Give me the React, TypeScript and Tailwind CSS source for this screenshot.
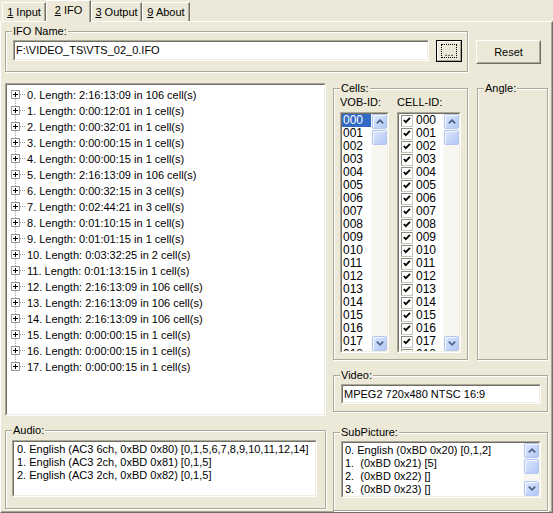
import React from "react";

const FONT = "font-['Liberation_Sans',Arial,sans-serif]";

const titles: [string, number][] = [
  ["2:16:13:09", 106],
  ["0:00:12:01", 1],
  ["0:00:32:01", 1],
  ["0:00:00:15", 1],
  ["0:00:00:15", 1],
  ["2:16:13:09", 106],
  ["0:00:32:15", 3],
  ["0:02:44:21", 3],
  ["0:01:10:15", 1],
  ["0:01:01:15", 1],
  ["0:03:32:25", 2],
  ["0:01:13:15", 1],
  ["2:16:13:09", 106],
  ["2:16:13:09", 106],
  ["2:16:13:09", 106],
  ["0:00:00:15", 1],
  ["0:00:00:15", 1],
  ["0:00:00:15", 1],
];

// the lists show 000-017 and the top of 018
const ids = Array.from({ length: 19 }, (_, i) => String(i).padStart(3, "0"));

const audio = [
  "0. English (AC3 6ch, 0xBD 0x80) [0,1,5,6,7,8,9,10,11,12,14]",
  "1. English (AC3 2ch, 0xBD 0x81) [0,1,5]",
  "2. English (AC3 2ch, 0xBD 0x82) [0,1,5]",
];

const subs = [
  "0. English (0xBD 0x20) [0,1,2]",
  "1.  (0xBD 0x21) [5]",
  "2.  (0xBD 0x22) []",
  "3.  (0xBD 0x23) []",
];

function Group({ label, className, children }: { label: string; className: string; children?: React.ReactNode }) {
  return (
    <fieldset className={`border border-[#ACA899] shadow-[inset_1px_1px_0_#fff,1px_1px_0_#fff] ${className}`}>
      <legend className="ml-[6px] bg-[#ECE9D8] px-[1px] leading-[13px]">{label}</legend>
      {children}
    </fieldset>
  );
}

function Sunken({ className, children }: { className: string; children?: React.ReactNode }) {
  return (
    <div className={`border border-t-[#ACA899] border-l-[#ACA899] border-r-white border-b-white ${className}`}>
      <div className="h-full w-full overflow-hidden border border-t-[#716F64] border-l-[#716F64] border-r-[#F1EFE2] border-b-[#F1EFE2] bg-white">
        {children}
      </div>
    </div>
  );
}

function ScrollBtn({ dir }: { dir?: "up" | "down" }) {
  return (
    <div className="flex h-[15px] w-[15px] items-center justify-center rounded-[2px] border border-[#B4C6F2] bg-gradient-to-br from-[#DDE7FE] to-[#B3C7F6] shadow-[inset_1px_1px_0_#F2F6FF]">
      {dir && (
        <svg width="8" height="5" viewBox="0 0 8 5">
          <path
            d={dir === "up" ? "M0.8 4.4 L4 1.2 L7.2 4.4" : "M0.8 0.6 L4 3.8 L7.2 0.6"}
            fill="none"
            stroke="#4D6185"
            strokeWidth="1.7"
          />
        </svg>
      )}
    </div>
  );
}

function VScroll() {
  return (
    <div className="flex h-full w-[16px] shrink-0 flex-col justify-between bg-[#F7F6F1] pl-[1px]">
      <div className="flex flex-col gap-[1px]">
        <ScrollBtn dir="up" />
        <ScrollBtn />
      </div>
      <ScrollBtn dir="down" />
    </div>
  );
}

function TreeRow({ i, t, n }: { i: number; t: string; n: number }) {
  const first = i === 0;
  const last = i === titles.length - 1;
  return (
    <div className="flex h-[16px] items-center">
      <svg width="18" height="16" className="shrink-0">
        {!first && <line x1="8.5" y1="0" x2="8.5" y2="3" stroke="#A0A0A0" strokeDasharray="1 1" />}
        {!last && <line x1="8.5" y1="12" x2="8.5" y2="16" stroke="#A0A0A0" strokeDasharray="1 1" />}
        <line x1="13" y1="7.5" x2="18" y2="7.5" stroke="#A0A0A0" strokeDasharray="1 1" />
        <rect x="4.5" y="3.5" width="8" height="8" fill="#fff" stroke="#919B9C" />
        <line x1="6" y1="7.5" x2="11" y2="7.5" stroke="#000" />
        <line x1="8.5" y1="5" x2="8.5" y2="10" stroke="#000" />
      </svg>
      <span className="whitespace-nowrap pl-[2px]">
        {i}. Length: {t} in {n} cell(s)
      </span>
    </div>
  );
}

function Tab({ digit, rest, w, selected }: { digit: string; rest: string; w: string; selected?: boolean }) {
  return (
    <div
      className={`flex shrink-0 items-center justify-center border-l border-t border-r border-l-white border-t-white border-r-[#716F64] bg-[#ECE9D8] shadow-[inset_-1px_0_0_#ACA899] ${w} ${
        selected ? "relative z-10 h-[22px] pb-[2px]" : "mt-[2px] h-[19px]"
      }`}
    >
      <span className="whitespace-nowrap">
        <span className="underline">{digit}</span> {rest}
      </span>
    </div>
  );
}

function Check() {
  return (
    <div className="flex h-[12px] w-[12px] shrink-0 items-center justify-center border border-t-[#8E8D84] border-l-[#8E8D84] border-r-[#C9C7BA] border-b-[#C9C7BA] bg-white">
      <svg width="8" height="7" viewBox="0 0 8 7">
        <path d="M0.8 3 L2.8 5.2 L7 0.8" fill="none" stroke="#000" strokeWidth="1.8" />
      </svg>
    </div>
  );
}

export default function App() {
  return (
    <div className={`h-[513px] w-[553px] overflow-hidden bg-[#ECE9D8] text-[11px] text-black ${FONT}`}>
      <div className="flex h-[21px] items-start pl-[2px]">
        <Tab digit="1" rest="Input" w="w-[44px]" />
        <Tab digit="2" rest="IFO" w="w-[45px]" selected />
        <Tab digit="3" rest="Output" w="w-[51px]" />
        <Tab digit="9" rest="About" w="w-[48px]" />
      </div>

      <div className="h-[492px] border-l border-t border-r border-b border-l-white border-t-white border-r-[#716F64] border-b-[#716F64] pl-[4px] pt-[3px] shadow-[inset_-1px_-1px_0_#ACA899]">
        {/* row 1 */}
        <div className="flex items-start">
          <Group label="IFO Name:" className="h-[47px] w-[463px]">
            <div className="flex items-start pl-[7px] pt-[2px]">
              <Sunken className="h-[21px] w-[416px]">
                <div className="pl-[1px] pt-[2px] leading-[13px]">F:\VIDEO_TS\VTS_02_0.IFO</div>
              </Sunken>
              <div className="ml-[7px] h-[22px] w-[26px] border border-black">
                <div className="flex h-full w-full items-center justify-center border border-t-white border-l-white border-r-[#ACA899] border-b-[#ACA899]">
                  <div className="flex h-[14px] w-[16px] items-end justify-center border border-dotted border-black leading-[10px]">
                    ...
                  </div>
                </div>
              </div>
            </div>
          </Group>
          <div className="ml-[8px] mt-[15px] h-[24px] w-[65px] border border-t-white border-l-white border-r-[#716F64] border-b-[#716F64]">
            <div className="flex h-full w-full items-center justify-center border border-t-[#ECE9D8] border-l-[#ECE9D8] border-r-[#ACA899] border-b-[#ACA899]">
              Reset
            </div>
          </div>
        </div>

        {/* row 2 */}
        <div className="mt-[10px] flex items-start">
          <Sunken className="mt-[1px] h-[333px] w-[321px]">
            <div className="pt-[2px]">
              {titles.map(([t, n], i) => (
                <TreeRow key={i} i={i} t={t} n={n} />
              ))}
            </div>
          </Sunken>

          <div className="ml-[7px] flex flex-col">
            <div className="flex items-start">
              <Group label="Cells:" className="h-[278px] w-[135px]">
                <div className="flex gap-[8px] pl-[6px] pt-[1px]">
                  <div className="flex flex-col">
                    <div className="leading-[13px]">VOB-ID:</div>
                    <Sunken className="mt-[3px] h-[241px] w-[49px]">
                      <div className="flex h-full">
                        <div className="flex-1 overflow-hidden text-[12px] leading-[13px]">
                          {ids.map((id, i) => (
                            <div key={id} className={`h-[13px] pl-[1px] ${i === 0 ? "bg-[#316AC5] text-white" : ""}`}>
                              {id}
                            </div>
                          ))}
                        </div>
                        <VScroll />
                      </div>
                    </Sunken>
                  </div>
                  <div className="flex flex-col">
                    <div className="leading-[13px]">CELL-ID:</div>
                    <Sunken className="mt-[3px] h-[241px] w-[64px]">
                      <div className="flex h-full">
                        <div className="flex-1 overflow-hidden text-[12px] leading-[13px]">
                          {ids.map((id) => (
                            <div key={id} className="flex h-[13px] items-center gap-[3px] pl-[2px]">
                              <Check />
                              <span>{id}</span>
                            </div>
                          ))}
                        </div>
                        <VScroll />
                      </div>
                    </Sunken>
                  </div>
                </div>
              </Group>
              <Group label="Angle:" className="ml-[9px] h-[278px] w-[71px]" />
            </div>
            <Group label="Video:" className="mt-[9px] h-[43px] w-[215px]">
              <div className="pl-[7px] pt-[2px]">
                <Sunken className="h-[20px] w-[200px]">
                  <div className="pl-[1px] pt-[2px] leading-[13px]">MPEG2 720x480 NTSC 16:9</div>
                </Sunken>
              </div>
            </Group>
          </div>
        </div>

        {/* row 3 */}
        <div className="mt-[8px] flex items-start">
          <Group label="Audio:" className="h-[85px] w-[321px]">
            <div className="pl-[6px] pt-[3px]">
              <Sunken className="h-[57px] w-[305px]">
                <div className="pl-[3px] pt-[1px] leading-[13px]">
                  {audio.map((a) => (
                    <div key={a} className="whitespace-nowrap">
                      {a}
                    </div>
                  ))}
                </div>
              </Sunken>
            </div>
          </Group>
          <Group label="SubPicture:" className="ml-[7px] mt-[2px] h-[85px] w-[215px]">
            <div className="pl-[7px] pt-[2px]">
              <Sunken className="h-[57px] w-[200px]">
                <div className="flex h-full">
                  <div className="flex-1 overflow-hidden pl-[2px] pt-[1px] leading-[13px]">
                    {subs.map((s) => (
                      <div key={s} className="whitespace-pre">
                        {s}
                      </div>
                    ))}
                  </div>
                  <VScroll />
                </div>
              </Sunken>
            </div>
          </Group>
        </div>
      </div>
    </div>
  );
}
